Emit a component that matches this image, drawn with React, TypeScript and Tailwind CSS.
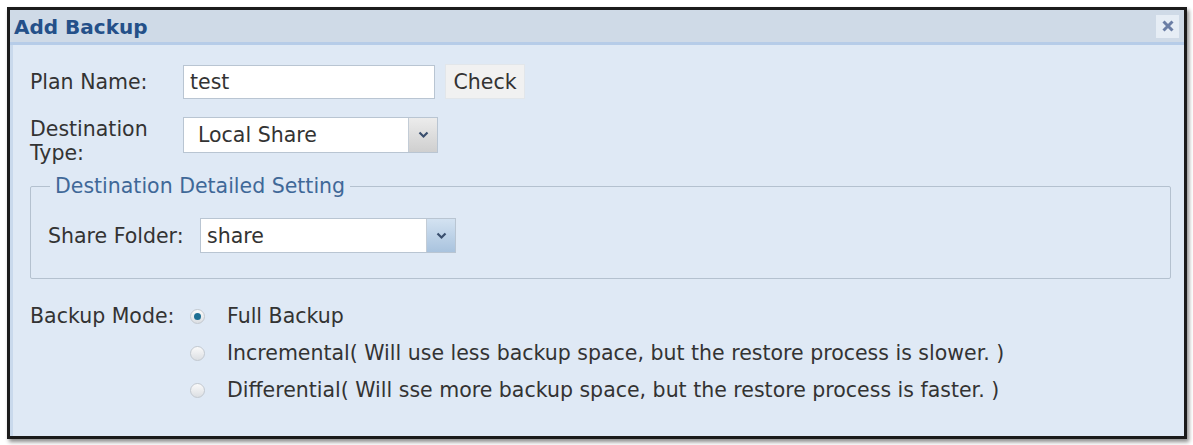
import React, { useState } from 'react';

type Mode = 'full' | 'incremental' | 'differential';

const modes: { id: Mode; label: string }[] = [
  { id: 'full', label: 'Full Backup' },
  { id: 'incremental', label: 'Incremental( Will use less backup space, but the restore process is slower. )' },
  { id: 'differential', label: 'Differential( Will sse more backup space, but the restore process is faster. )' },
];

function SelectBox({ value, className, blue }: { value: string; className: string; blue?: boolean }) {
  return (
    <div className={`flex border border-[#b9c5d2] bg-white ${className}`}>
      <div className="flex flex-1 items-center text-[#333]">{value}</div>
      <div
        className={`flex w-[29px] items-center justify-center border-l border-[#c3ccd6] ${
          blue ? 'bg-gradient-to-b from-[#d3e2f1] to-[#a9c3de]' : 'bg-gradient-to-b from-[#ececec] to-[#cfcfcf]'
        }`}
      >
        <svg width="11" height="8" viewBox="0 0 11 8">
          <path d="M1.5 1.5 L5.5 5.5 L9.5 1.5" fill="none" stroke="#3a4f6e" strokeWidth="2.2" />
        </svg>
      </div>
    </div>
  );
}

function Radio({ checked }: { checked: boolean }) {
  return (
    <span className="flex h-[15px] w-[15px] items-center justify-center rounded-full border border-[#c2c8cf] bg-gradient-to-b from-[#fafafa] to-[#dcdfe3]">
      {checked && <span className="h-[7px] w-[7px] rounded-full bg-[#1e6f93]" />}
    </span>
  );
}

export default function App() {
  const [mode, setMode] = useState<Mode>('full');

  return (
    <div className="h-[445px] w-[1193px] bg-white pl-[7px] pt-[7px]" style={{ fontFamily: '"DejaVu Sans", Verdana, sans-serif' }}>
      <div className="flex h-[432px] w-[1180px] flex-col border-[3px] border-[#1b1b1b] bg-[#dfe9f5] shadow-[2px_3px_4px_rgba(0,0,0,0.45)]">
        {/* title bar */}
        <div className="flex h-[35px] shrink-0 items-center justify-between border-b-[3px] border-[#b6cce8] bg-[#cfdae7] pl-[4px] pr-[5px]">
          <span className="mt-[1px] text-[20px] font-bold leading-[24px] text-[#245089]">Add Backup</span>
          <button className="flex h-[23px] w-[23px] items-center justify-center bg-[#e6edf5]">
            <svg width="14" height="14" viewBox="0 0 14 14">
              <path d="M2.5 2.5 L11.5 11.5 M11.5 2.5 L2.5 11.5" stroke="#6b7ea5" strokeWidth="3" />
            </svg>
          </button>
        </div>

        {/* form body */}
        <div className="flex flex-1 flex-col border-l-[3px] border-[#c9d9ec] pl-[17px] pr-[13px] pt-[19px] text-[20.5px] leading-[24px] text-[#333]">
          <div className="flex h-[35px] items-center">
            <div className="w-[153px]">Plan Name:</div>
            <div className="flex h-[34px] w-[252px] items-center border border-[#b9c5d2] bg-white pl-[6px]">test</div>
            <button className="ml-[10px] h-[35px] w-[80px] border border-[#e2e6ea] bg-[#f1f1f1] text-[#333]">Check</button>
          </div>

          <div className="mt-[18px] flex items-start">
            <div className="w-[153px]">
              Destination
              <br />
              Type:
            </div>
            <SelectBox value="Local Share" className="h-[36px] w-[255px] pl-[14px]" />
          </div>

          <fieldset className="mt-[9px] rounded-[2px] border border-[#b4c1cf] pb-[25px] pl-[17px]">
            <legend className="ml-[2px] px-[5px] text-[#3f6898]">Destination Detailed Setting</legend>
            <div className="mt-[20px] flex items-center">
              <div className="w-[152px]">Share Folder:</div>
              <SelectBox value="share" className="h-[35px] w-[256px] pl-[6px]" blue />
            </div>
          </fieldset>

          <div className="mt-[25px] flex">
            <div className="w-[160px]">Backup Mode:</div>
            <div className="flex flex-col gap-[13px]">
              {modes.map((m) => (
                <label key={m.id} className="flex cursor-pointer items-center gap-[22px]" onClick={() => setMode(m.id)}>
                  <Radio checked={mode === m.id} />
                  <span>{m.label}</span>
                </label>
              ))}
            </div>
          </div>
        </div>
      </div>
    </div>
  );
}
